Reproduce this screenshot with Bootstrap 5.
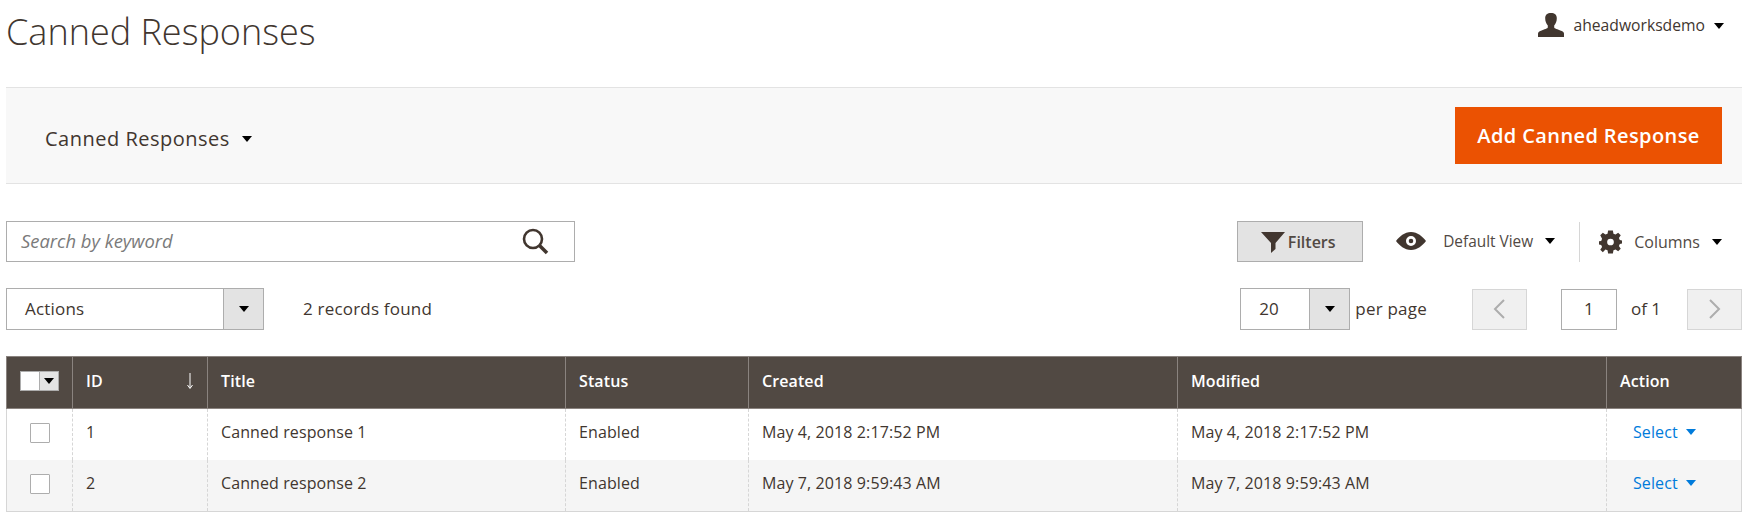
<!DOCTYPE html>
<html lang="en">
<head>
<meta charset="utf-8">
<title>Canned Responses</title>
<link href="https://cdn.jsdelivr.net/npm/bootstrap@5.3.0/dist/css/bootstrap.min.css" rel="stylesheet">
<style>
html,body{height:519px;overflow:hidden}
body{font-family:"Open Sans",sans-serif;color:#41362f;font-size:17px;background:#fff}
.page-wrap{padding:0 6px}
.top-head{height:87px}
.page-heading{font-size:36px;font-weight:300;margin:0;padding-top:9px;color:#41362f;line-height:46px}
.user-menu{font-size:15.7px;padding:12px 18px 0 0;color:#41362f;gap:9px}
.user-menu span{margin-top:2px}
.tri{display:inline-block;width:0;height:0;border-left:5.5px solid transparent;border-right:5.5px solid transparent;border-top:6px solid #000}
.action-bar{height:97px;background:#f8f8f8;border-top:1px solid #e3e3e3;border-bottom:1px solid #e3e3e3;padding:0 20px 0 39px;margin-bottom:37px}
.switcher{font-size:20px;letter-spacing:.5px;gap:12px;padding-top:6px}
.add-btn{background:#eb5202;color:#fff;border:0;border-radius:0;font-size:20px;font-weight:600;width:267px;height:57px;letter-spacing:.4px;padding:0}
.add-btn:hover{background:#eb5202;color:#fff}
.search-box{width:569px;height:41px;border:1px solid #adadad;padding:0 25px 2px 14px}
.search-box em{font-size:18.4px;color:#7a7a7a}
.filters-btn{background:#e3e3e3;border:1px solid #adadad;border-radius:0;width:126px;height:41px;font-size:16px;font-weight:600;color:#514943;padding:0 4px 0 0;gap:3px}
.view-item{font-size:15.4px;color:#514943}
.view-sep{width:1px;height:40px;background:#d6d6d6;margin:0 19px 0 24px}
.select-box{height:42px;border:1px solid #adadad;background:#fff}
.select-arrow{background:#e3e3e3;border-left:1px solid #adadad;width:40px;height:100%}
.rec-text{margin-left:39px;letter-spacing:.2px}
.pager-btn{width:55px;height:41px;background:#f0f0f0;border:1px solid #d6d6d6}
.page-input{width:56px;height:41px;border:1px solid #adadad}
.grid-table{margin:26px 0 0;font-size:16px;border-collapse:collapse;table-layout:fixed;width:100%;--bs-table-bg:transparent}
.grid-table th{background:#514943;color:#fff;font-weight:600;height:52px;vertical-align:middle;padding:0 13px 3px;border:1px solid #8a837f;font-size:16px;letter-spacing:.1px}
.grid-table td{height:51px;vertical-align:middle;padding:0 13px 4px;border:0;border-left:1px dashed #d6d6d6;border-right:1px dashed #d6d6d6;color:#41362f;letter-spacing:.1px}
.grid-table tr.alt td{background:#f5f5f5;height:52px}
.grid-table tbody tr:last-child td{border-bottom:1px solid #d6d6d6}
.grid-table td:first-child{border-left:1px solid #d6d6d6;padding-bottom:2px}
.grid-table td:last-child{border-right:1px solid #d6d6d6}
.head-check{width:39px;height:20px;border:1px solid #adadad;background:#fff}
.head-check i{display:flex;align-items:center;justify-content:center;margin-left:auto;width:19px;height:100%;background:#e3e3e3;border-left:1px solid #adadad}
.head-check .tri{border-left-width:5px;border-right-width:5px}
.row-check{width:20px;height:20px;border:1px solid #adadad;background:#fff;border-radius:1px;display:block;margin:0 auto}
.sel-link{color:#007bdb;text-decoration:none;padding-left:13px;gap:8px}
.sel-link .tri{border-top-color:#007bdb}
.g-eye{margin:0 17px 0 33px}
.g-gear{margin-right:12px}
.g-label{margin-right:12px}
.g-cols{font-size:16px}
.last-view{padding-right:20px}
.row-two{margin-top:26px}
.per-label{margin:0 45px 0 5px;letter-spacing:.2px}
</style>
</head>
<body>
<div class="page-wrap">
  <header class="top-head d-flex justify-content-between align-items-start">
    <h1 class="page-heading">Canned Responses</h1>
    <div class="user-menu d-flex align-items-center">
      <svg width="26" height="24" viewBox="0 0 26 24" fill="#41362f"><path d="M13 0c3.600 0 5.800 1.800 5.800 5.200 0 3-1 5.600-2.600 7.200v2.200c0 .9 3.500 1.800 6.800 3.200 2 .8 3 1.600 3 3V24H0v-3.200c0-1.400 1-2.200 3-3 3.300-1.400 6.800-2.300 6.800-3.200v-2.200C8.200 10.800 7.200 8.200 7.200 5.200 7.200 1.800 9.400 0 13 0z"/></svg>
      <span>aheadworksdemo</span><span class="tri"></span>
    </div>
  </header>
  <section class="action-bar d-flex justify-content-between align-items-center">
    <div class="switcher d-flex align-items-center"><span>Canned Responses</span><span class="tri"></span></div>
    <button type="button" class="btn add-btn">Add Canned Response</button>
  </section>
  <section class="d-flex justify-content-between align-items-center">
    <div class="search-box d-flex justify-content-between align-items-center">
      <em>Search by keyword</em>
      <svg width="28" height="28" viewBox="0 0 28 28" fill="none" stroke="#41362f"><circle cx="12" cy="12" r="9" stroke-width="2.600"/><path d="M18.500 18.500L26 26" stroke-width="3.600"/></svg>
    </div>
    <div class="d-flex align-items-center">
      <button type="button" class="btn filters-btn d-flex align-items-center justify-content-center">
        <svg width="24" height="22" viewBox="0 0 24 22" fill="#41362f"><path d="M0 1h24L14.500 12v6L10 22V12z"/></svg>Filters
      </button>
      <div class="view-item d-flex align-items-center">
        <svg class="g-eye" width="30" height="18" viewBox="0 0 30 18" fill="#41362f"><path fill-rule="evenodd" d="M15 0c6.500 0 11.500 4.500 15 9-3.500 4.500-8.500 9-15 9S3.500 13.500 0 9C3.500 4.500 8.500 0 15 0zm0 4a5 5 0 1 0 0 10 5 5 0 0 0 0-10zm0 2.700a2.300 2.300 0 1 1 0 4.600 2.300 2.300 0 0 1 0-4.600z"/></svg>
        <span class="g-label">Default View</span><span class="tri"></span>
      </div>
      <div class="view-sep"></div>
      <div class="view-item last-view d-flex align-items-center">
        <svg class="g-gear" width="23" height="24" viewBox="0 0 24 24" fill="#41362f"><path fill-rule="evenodd" d="M9.500 0h5l.6 3.300 2.200.9L20 2.300 22.700 5l-1.900 2.700.9 2.200 3.300.6v3l-3.300.6-.9 2.200 1.900 2.700-2.700 2.700-2.700-1.900-2.200.9-.6 3.300h-5l-.6-3.300-2.200-.9L4 22.700 1.300 20l1.900-2.700-.9-2.200-3.300-.6v-3l3.300-.6.9-2.200L1.300 5 4 2.300l2.700 1.900 2.200-.9L9.500 0zM12 8.500a3.500 3.500 0 1 0 0 7 3.500 3.500 0 0 0 0-7z"/></svg>
        <span class="g-label g-cols">Columns</span><span class="tri"></span>
      </div>
    </div>
  </section>
  <section class="row-two d-flex justify-content-between align-items-center">
    <div class="d-flex align-items-center">
      <div class="select-box d-flex align-items-center" style="width:258px"><span class="flex-grow-1" style="padding-left:18px;letter-spacing:.2px">Actions</span><span class="select-arrow d-flex align-items-center justify-content-center"><span class="tri"></span></span></div>
      <span class="rec-text">2 records found</span>
    </div>
    <div class="d-flex align-items-center">
      <div class="select-box d-flex align-items-center" style="width:110px"><span class="flex-grow-1" style="padding-left:18px">20</span><span class="select-arrow d-flex align-items-center justify-content-center"><span class="tri"></span></span></div>
      <span class="per-label">per page</span>
      <div class="pager-btn d-flex align-items-center justify-content-center"><svg width="14" height="24" viewBox="0 0 14 24" fill="none" stroke="#adadad" stroke-width="2"><path d="M12 3L3 12l9 9"/></svg></div>
      <div class="page-input d-flex align-items-center justify-content-center" style="margin-left:34px">1</div>
      <span style="margin:0 26px 0 14px">of 1</span>
      <div class="pager-btn d-flex align-items-center justify-content-center"><svg width="14" height="24" viewBox="0 0 14 24" fill="none" stroke="#adadad" stroke-width="2"><path d="M2 3l9 9-9 9"/></svg></div>
    </div>
  </section>
  <table class="table grid-table">
    <colgroup><col style="width:66px"><col style="width:135px"><col style="width:358px"><col style="width:183px"><col style="width:429px"><col style="width:429px"><col></colgroup>
    <thead><tr>
      <th><div class="head-check mx-auto"><i><span class="tri"></span></i></div></th>
      <th><div class="d-flex justify-content-between align-items-center"><span>ID</span><svg width="8" height="16" viewBox="0 0 8 16" fill="none" stroke="#fff"><path d="M4 0v15M1.500 12L4 15.500 6.500 12"/></svg></div></th>
      <th>Title</th><th>Status</th><th>Created</th><th>Modified</th><th>Action</th>
    </tr></thead>
    <tbody>
      <tr><td><span class="row-check"></span></td><td>1</td><td>Canned response 1</td><td>Enabled</td><td>May 4, 2018 2:17:52 PM</td><td>May 4, 2018 2:17:52 PM</td><td><a href="#" class="sel-link d-inline-flex align-items-center">Select<span class="tri"></span></a></td></tr>
      <tr class="alt"><td><span class="row-check"></span></td><td>2</td><td>Canned response 2</td><td>Enabled</td><td>May 7, 2018 9:59:43 AM</td><td>May 7, 2018 9:59:43 AM</td><td><a href="#" class="sel-link d-inline-flex align-items-center">Select<span class="tri"></span></a></td></tr>
    </tbody>
  </table>
</div>
<script src="https://cdn.jsdelivr.net/npm/bootstrap@5.3.0/dist/js/bootstrap.bundle.min.js"></script>
</body>
</html>
